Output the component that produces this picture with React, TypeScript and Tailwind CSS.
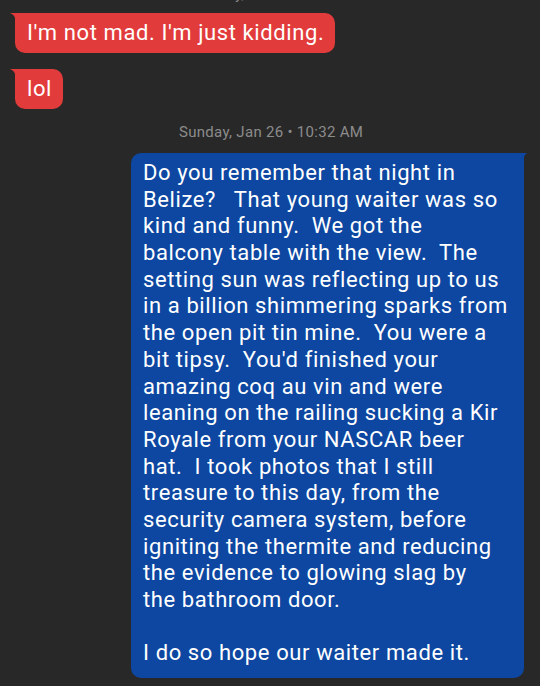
import React from 'react';

const blueLines = [
  'Do you remember that night in',
  'Belize?   That young waiter was so',
  'kind and funny.  We got the',
  'balcony table with the view.  The',
  'setting sun was reflecting up to us',
  'in a billion shimmering sparks from',
  'the open pit tin mine.  You were a',
  'bit tipsy.  You\'d finished your',
  'amazing coq au vin and were',
  'leaning on the railing sucking a Kir',
  'Royale from your NASCAR beer',
  'hat.  I took photos that I still',
  'treasure to this day, from the',
  'security camera system, before',
  'igniting the thermite and reducing',
  'the evidence to glowing slag by',
  'the bathroom door.',
  '',
  'I do so hope our waiter made it.',
];

function RedBubble({ text }: { text: string }) {
  return (
    <div className="relative ml-[15px] w-fit">
      <svg className="absolute -left-[5px] top-0" width="6" height="10" viewBox="0 0 6 10">
        <path d="M0 0 H6 V10 C6 5 4 1.5 0 0 Z" fill="#e23b3b" />
      </svg>
      <div className="rounded-[10px] rounded-tl-none bg-[#e23b3b] pl-3 pr-[11px] h-10 flex items-center text-[22px] tracking-[0.6px] leading-none text-white whitespace-nowrap">
        {text}
      </div>
    </div>
  );
}

export default function App() {
  return (
    <div
      className="h-[686px] overflow-hidden bg-[#282828] flex flex-col"
      style={{ fontFamily: 'Roboto, "Noto Sans", sans-serif' }}
    >
      <div className="-mt-[14px] h-[17px] text-center text-[14px] text-[#8c8c8c] leading-[17px]">
        Saturday, Jan 25 • 9:41 PM
      </div>
      <div className="mt-[10px]">
        <RedBubble text="I'm not mad. I'm just kidding." />
      </div>
      <div className="mt-4">
        <RedBubble text="lol" />
      </div>
      <div className="mt-[13px] pl-[179px] text-[15px] tracking-[0.3px] leading-5 text-[#8c8c8c]">
        Sunday, Jan 26 • 10:32 AM
      </div>
      <div className="relative ml-[131px] mr-4 mt-[11px]">
        <svg className="absolute -right-[3px] top-0" width="4" height="10" viewBox="0 0 4 10">
          <path d="M4 0 H0 V10 C0 5 1.5 1.5 4 0 Z" fill="#0d47a1" />
        </svg>
        <div className="rounded-[10px] rounded-tr-none bg-[#0d47a1] pl-3 pr-3 pt-[7px] pb-[11px] text-[22px] tracking-[0.6px] leading-[26.7px] text-white">
          {blueLines.map((l, i) => (
            <div key={i} className="whitespace-pre h-[26.7px]">
              {l}
            </div>
          ))}
        </div>
      </div>
    </div>
  );
}
